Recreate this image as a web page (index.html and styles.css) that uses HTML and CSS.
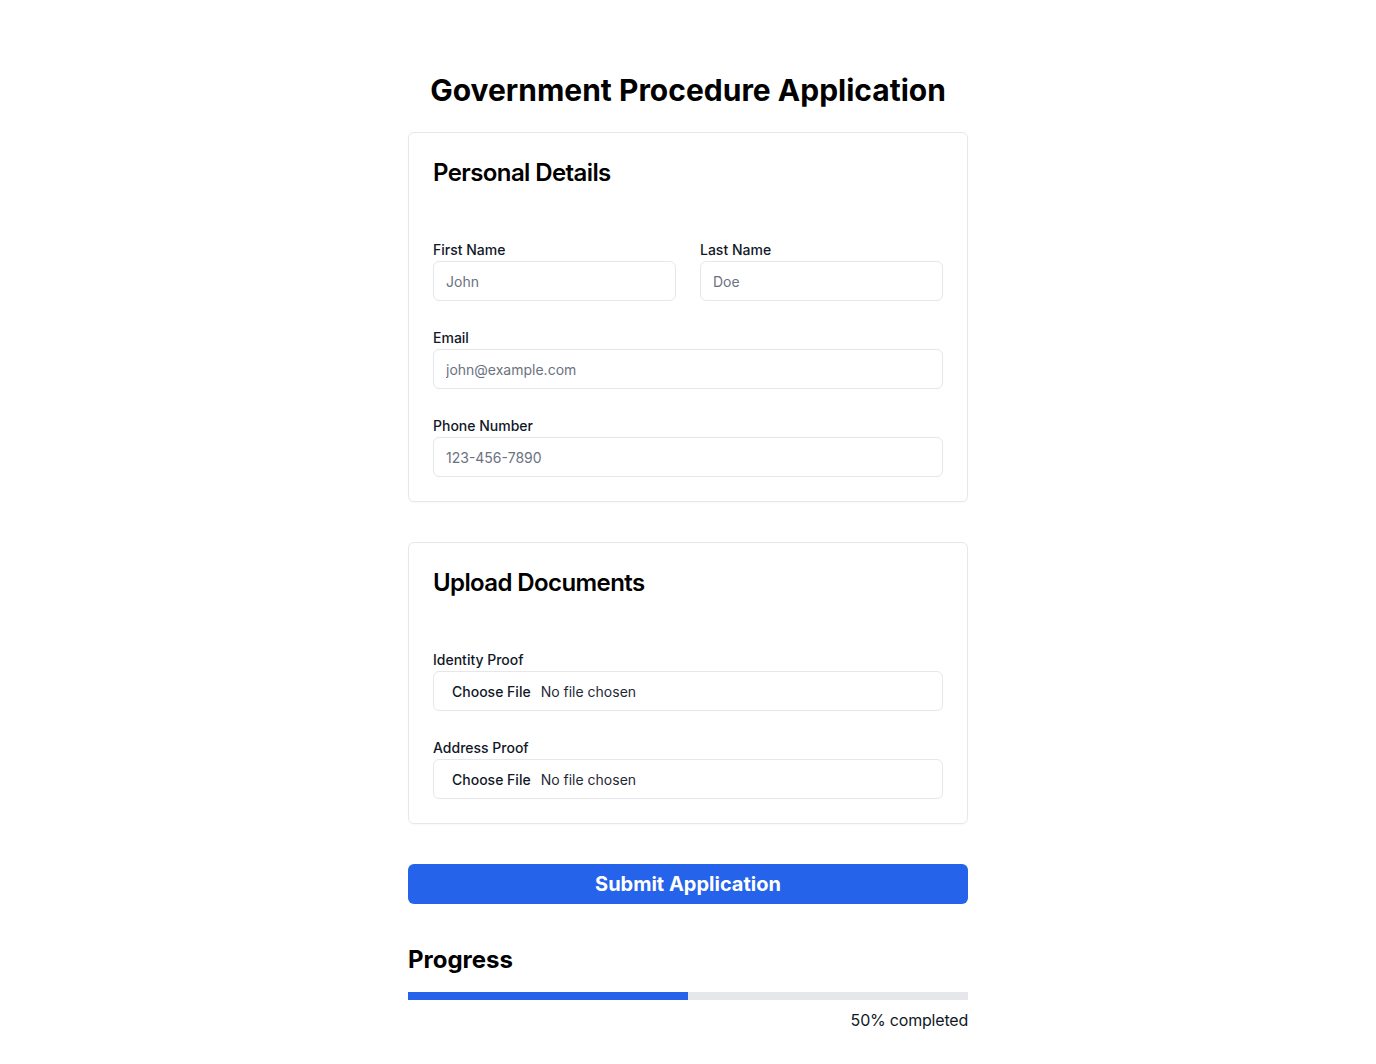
FILE: index.html
```html
<!DOCTYPE html>
<html lang="en">
<head>
<meta charset="utf-8">
<title>Government Procedure Application</title>
<link rel="stylesheet" href="styles.css">
</head>
<body>
<main class="page">
  <h1 class="title">Government Procedure Application</h1>

  <section class="card">
    <h2 class="card-title">Personal Details</h2>
    <div class="fields">
      <div class="row">
        <div class="field">
          <label class="label" for="fn">First Name</label>
          <input class="input" id="fn" type="text" placeholder="John">
        </div>
        <div class="field">
          <label class="label" for="ln">Last Name</label>
          <input class="input" id="ln" type="text" placeholder="Doe">
        </div>
      </div>
      <div class="field">
        <label class="label" for="em">Email</label>
        <input class="input" id="em" type="email" placeholder="john@example.com">
      </div>
      <div class="field">
        <label class="label" for="ph">Phone Number</label>
        <input class="input" id="ph" type="tel" placeholder="123-456-7890">
      </div>
    </div>
  </section>

  <section class="card">
    <h2 class="card-title">Upload Documents</h2>
    <div class="fields">
      <div class="field">
        <span class="label">Identity Proof</span>
        <label class="file">
          <input class="file-native" type="file">
          <span class="file-btn">Choose File</span>
          <span class="file-name">No file chosen</span>
        </label>
      </div>
      <div class="field">
        <span class="label">Address Proof</span>
        <label class="file">
          <input class="file-native" type="file">
          <span class="file-btn">Choose File</span>
          <span class="file-name">No file chosen</span>
        </label>
      </div>
    </div>
  </section>

  <button class="submit" type="button">Submit Application</button>

  <section class="progress">
    <h2 class="progress-title">Progress</h2>
    <div class="bar"><div class="bar-fill" style="width:50%"></div></div>
    <p class="progress-text">50% completed</p>
  </section>
</main>
</body>
</html>
```

FILE: styles.css
```css
* { box-sizing: border-box; }
html, body { margin: 0; padding: 0; background: #ffffff; }
body {
  font-family: Inter, "Noto Sans", "Liberation Sans", sans-serif;
  color: #111827;
}
.page {
  width: 560px;
  margin: 0 auto;
  padding-top: 72px;
  padding-bottom: 24px;
}
.title {
  margin: 0 0 24px;
  font-size: 30px;
  line-height: 36px;
  font-weight: 700;
  text-align: center;
  color: #000;
}
.card {
  border: 1px solid #e5e7eb;
  border-radius: 6px;
  padding: 24px;
  margin-bottom: 40px;
  box-shadow: 0 1px 2px rgba(0,0,0,0.03);
}
.card-title {
  margin: 0 0 51px;
  font-size: 24px;
  line-height: 32px;
  font-weight: 600;
  letter-spacing: -0.025em;
  color: #000;
}
.fields {
  display: flex;
  flex-direction: column;
  gap: 27px;
}
.row {
  display: grid;
  grid-template-columns: 1fr 1fr;
  gap: 24px;
}
.field {
  display: flex;
  flex-direction: column;
}
.label {
  display: block;
  font-size: 14px;
  line-height: 20px;
  font-weight: 500;
  color: #111827;
  margin-bottom: 1px;
}
.input {
  height: 40px;
  width: 100%;
  border: 1px solid #e5e7eb;
  border-radius: 6px;
  padding: 0 12px;
  font-family: inherit;
  font-size: 14px;
  color: #111827;
  background: #fff;
  outline: none;
}
.input::placeholder { color: #6b7280; }
.file {
  position: relative;
  display: flex;
  align-items: center;
  height: 40px;
  border: 1px solid #e5e7eb;
  border-radius: 6px;
  padding: 0 12px 0 18px;
  font-size: 14px;
  cursor: pointer;
}
.file-native {
  position: absolute;
  width: 1px;
  height: 1px;
  opacity: 0;
  overflow: hidden;
}
.file-btn {
  font-weight: 500;
  color: #111827;
  margin-right: 10px;
}
.file-name { color: #1f2937; }
.submit {
  display: block;
  width: 100%;
  height: 40px;
  border: none;
  border-radius: 6px;
  background: #2563eb;
  color: #fff;
  font-family: inherit;
  font-size: 20px;
  font-weight: 700;
  cursor: pointer;
}
.progress { margin-top: 40px; }
.progress-title {
  margin: 0 0 16px;
  font-size: 24px;
  line-height: 32px;
  font-weight: 700;
  color: #000;
}
.bar {
  height: 8px;
  background: #e5e7eb;
  overflow: hidden;
}
.bar-fill { height: 100%; background: #2563eb; }
.progress-text {
  margin: 8px 0 0;
  text-align: right;
  font-size: 16px;
  line-height: 24px;
  letter-spacing: -0.2px;
  color: #111827;
}
```
